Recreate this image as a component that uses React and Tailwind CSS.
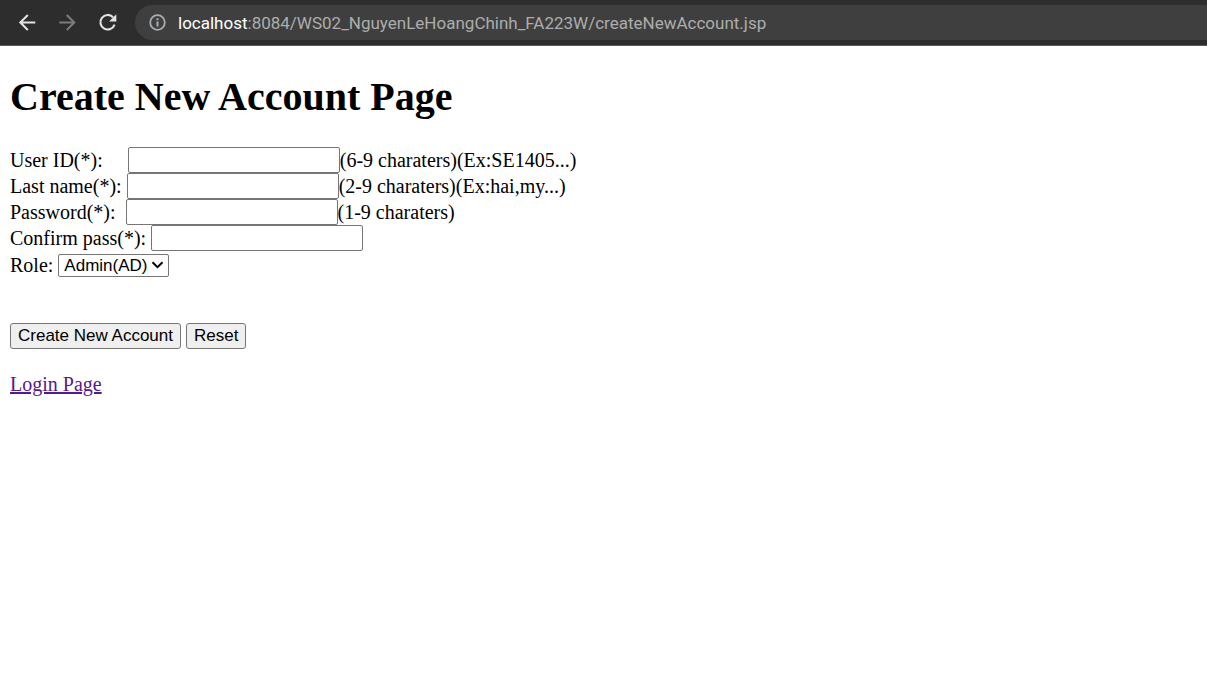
import React from "react";

const inputClass =
  "box-border h-[26px] w-[212px] rounded-[2px] border border-[#767676] bg-white px-1 font-['Liberation_Sans',Arial,sans-serif] text-[17px] text-black";
const buttonClass =
  "h-[26px] rounded-[3px] border border-[#767676] bg-[#efefef] px-[7px] font-['Liberation_Sans',Arial,sans-serif] text-[17px] leading-5 text-black";

const fields = [
  { id: "userId", label: "User ID(*):", gap: "gap-[25px]", type: "text", hint: "(6-9 charaters)(Ex:SE1405...)" },
  { id: "lastName", label: "Last name(*):", gap: "gap-[5px]", type: "text", hint: "(2-9 charaters)(Ex:hai,my...)" },
  { id: "password", label: "Password(*):", gap: "gap-[10px]", type: "password", hint: "(1-9 charaters)" },
  { id: "confirm", label: "Confirm pass(*):", gap: "gap-[5px]", type: "password", hint: "" },
];

function BrowserBar() {
  return (
    <header className="flex h-[46px] items-center border-b border-[#5a5a5a] bg-[#2d2d2d] pl-[15px]">
      <nav className="flex items-center gap-4">
        <button type="button" aria-label="Back" className="flex size-6 items-center justify-center text-[#e3e3e3]">
          <svg width="24" height="24" viewBox="0 0 24 24" fill="none" stroke="currentColor" strokeWidth="2">
            <path d="M20.3 11.5H5.5M12.8 4L5.3 11.5l7.5 7.5" />
          </svg>
        </button>
        <button type="button" aria-label="Forward" className="flex size-6 items-center justify-center text-[#7c7c7c]">
          <svg width="24" height="24" viewBox="0 0 24 24" fill="none" stroke="currentColor" strokeWidth="2">
            <path d="M4.3 11.5h14.5M11.8 4l7.5 7.5-7.5 7.5" />
          </svg>
        </button>
        <button type="button" aria-label="Reload" className="flex size-6 items-center justify-center text-[#e3e3e3]">
          <svg width="24" height="24" viewBox="0 0 24 24" fill="none">
            <path d="M18 6.2A7.3 7.3 0 1 0 19.6 13.6" stroke="currentColor" strokeWidth="2.1" />
            <path d="M21.3 3.2v7.2h-7.2z" fill="currentColor" />
          </svg>
        </button>
      </nav>
      <div className="ml-4 flex h-[35px] flex-1 items-center gap-3 rounded-l-full bg-[#3f3f3f] pl-[14px]">
        <svg width="17" height="17" viewBox="0 0 17 17" fill="none" stroke="#a9acb1" strokeWidth="2" className="shrink-0">
          <circle cx="8.5" cy="8.5" r="7.3" strokeWidth="1.8" />
          <path d="M8.5 7.5v5M8.5 4.2v2" />
        </svg>
        <span className="whitespace-nowrap font-['Roboto','Noto_Sans',sans-serif] text-[17px] leading-6 text-[#adadad]">
          <span className="text-white">localhost</span>:8084/WS02_NguyenLeHoangChinh_FA223W/createNewAccount.jsp
        </span>
      </div>
    </header>
  );
}

export default function App() {
  return (
    <div className="min-h-screen bg-white font-['Liberation_Serif','Times_New_Roman',serif] text-[20px] leading-6 text-black">
      <BrowserBar />
      <main className="px-[10px] pt-7">
        <h1 className="text-[40px] font-bold leading-[46px]">Create New Account Page</h1>
        <form className="pt-[27px]" onSubmit={(e) => e.preventDefault()}>
          {fields.map((f) => (
            <div key={f.id} className="flex items-center">
              <div className={`flex items-center ${f.gap}`}>
                <label htmlFor={f.id}>{f.label}</label>
                <input id={f.id} type={f.type} className={inputClass} />
              </div>
              <span>{f.hint}</span>
            </div>
          ))}
          <div className="flex items-center gap-[5px] pt-[2px]">
            <label htmlFor="role">Role:</label>
            <div className="grid items-center">
              <select
                id="role"
                className="col-start-1 row-start-1 h-[23px] w-[111px] appearance-none rounded-[2px] border border-[#767676] bg-white pl-[5px] pt-px font-['Liberation_Sans',Arial,sans-serif] text-[17px] leading-5 text-black"
              >
                <option>Admin(AD)</option>
                <option>User(US)</option>
              </select>
              <svg className="pointer-events-none col-start-1 row-start-1 mr-[5px] justify-self-end" width="13" height="8" viewBox="0 0 13 8" fill="none" stroke="#000" strokeWidth="2">
                <path d="M1.5 1.2l5 5 5-5" />
              </svg>
            </div>
          </div>
          <div className="flex gap-[5px] pt-[46px]">
            <button type="submit" className={buttonClass}>Create New Account</button>
            <button type="reset" className={buttonClass}>Reset</button>
          </div>
        </form>
        <p className="pt-[23px]">
          <a href="#login" className="text-[#551a8b] underline">Login Page</a>
        </p>
      </main>
    </div>
  );
}
